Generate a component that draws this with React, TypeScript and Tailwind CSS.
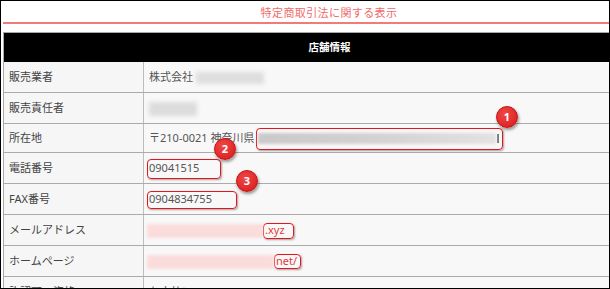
import React from 'react';

const font = { fontFamily: '"Noto Sans", "Noto Sans CJK JP", sans-serif' };

type RowProps = { label: string; h?: string; children?: React.ReactNode };

const Row: React.FC<RowProps> = ({ label, h = 'h-[31px]', children }) => (
  <div className={`flex ${h} border-b border-[#ababab]`}>
    <div className="w-[140px] shrink-0 flex items-center pl-[5px] pt-[1px] bg-[#f6f6f6] border-r border-[#bdbdbd] text-[11px] text-[#444]">
      {label}
    </div>
    <div className="flex-1 flex items-center pl-[3px] pt-[1px] bg-[#f8f8f8] text-[11px] text-[#555]">{children}</div>
  </div>
);

const Box: React.FC<{ className: string; children?: React.ReactNode }> = ({ className, children }) => (
  <span
    className={`inline-flex items-center border-[1.5px] border-[#e8141b] rounded-[4px] shadow-[1px_1px_2px_rgba(0,0,0,0.35)] ${className}`}
  >
    {children}
  </span>
);

const Badge: React.FC<{ n: number; pos: string }> = ({ n, pos }) => (
  <div
    className={`absolute ${pos} w-[22px] h-[22px] rounded-full flex items-center justify-center text-white text-[11px] font-bold bg-[radial-gradient(circle_at_40%_35%,#f04848,#d81818)] border border-[#c41010] shadow-[1px_2px_3px_rgba(0,0,0,0.4)]`}
  >
    {n}
  </div>
);

const App: React.FC = () => {
  return (
    <div className="w-[610px] h-[289px] border border-black bg-white overflow-hidden relative" style={font}>
      <div className="ml-[2px]">
        <div className="h-[21px] flex items-center justify-center pl-[46px] pt-[3px] text-[11px] text-[#f06a6a] tracking-[0.4px]">
          特定商取引法に関する表示
        </div>
        <div className="h-[2px] bg-[#f37a7a]" />

        <div className="mt-[8px] border-t border-l border-[#a8a8a8]">
          <div className="h-[29px] bg-black flex items-center justify-center pl-[46px] pt-[1px] text-white text-[10.5px] font-bold">
            店舗情報
          </div>

          <Row label="販売業者">
            <span className="ml-[2px]">株式会社</span>
            <span className="ml-[3px] w-[68px] h-[12px] bg-[#dedede] blur-[2px]" />
          </Row>

          <Row label="販売責任者">
            <span className="ml-[2px] w-[48px] h-[14px] bg-[#dcdcdc] blur-[2px]" />
          </Row>

          <Row label="所在地" h="h-[29px]">
            <span className="ml-[2px]">〒210-0021 神奈川県</span>
            <Box className="ml-[2px] w-[247px] h-[22px] pl-[1px] pr-[3px]">
              <span className="flex-1 h-[11px] bg-gradient-to-r from-[#c9c9c9] via-[#d2d2d2] to-[#e2e2e2] blur-[1.5px]" />
              <span className="ml-[1px] w-[2px] h-[9px] bg-[#777]" />
            </Box>
          </Row>

          <Row label="電話番号">
            <Box className="w-[74px] h-[20px] pl-[1px]">09041515</Box>
          </Row>

          <Row label="FAX番号">
            <Box className="w-[90px] h-[18px] pl-[1px]">0904834755</Box>
          </Row>

          <Row label="メールアドレス">
            <span className="w-[116px] h-[14px] bg-[#fbdcdc] blur-[1.5px]" />
            <Box className="w-[31px] h-[16px] pl-[1px] text-[#e53a3a]">.xyz</Box>
          </Row>

          <Row label="ホームページ">
            <span className="w-[127px] h-[14px] bg-[#fbdcdc] blur-[1.5px]" />
            <Box className="w-[27px] h-[15px] pl-[1px] text-[#e53a3a]">net/</Box>
          </Row>

          <Row label="許認可・資格">
            <span className="ml-[2px]">お支払い</span>
          </Row>
        </div>
      </div>

      <Badge n={1} pos="left-[495px] top-[105px]" />
      <Badge n={2} pos="left-[213px] top-[137px]" />
      <Badge n={3} pos="left-[235px] top-[169px]" />
    </div>
  );
};

export default App;
